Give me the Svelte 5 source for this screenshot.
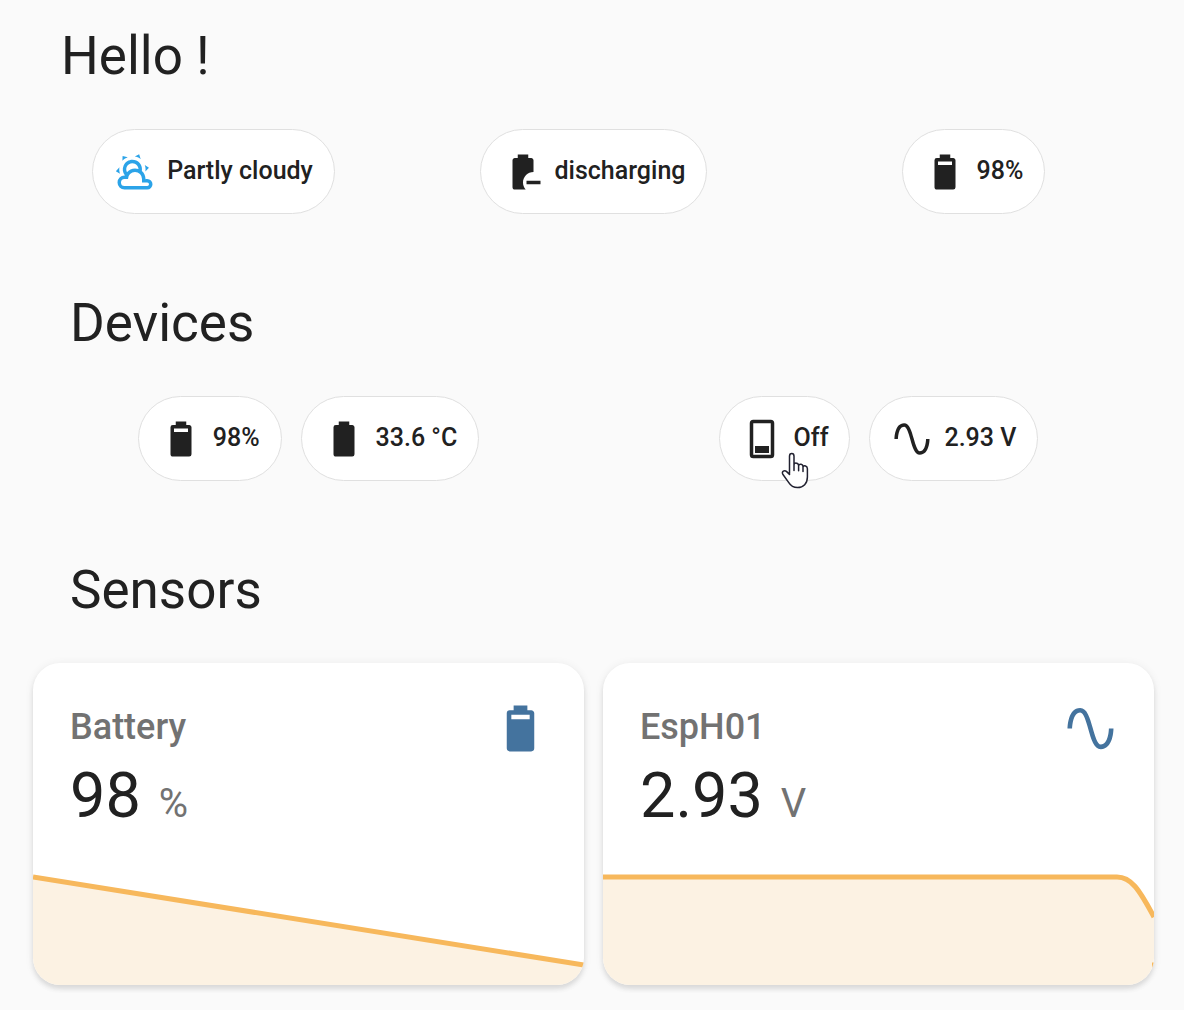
<script>
  const icons = {
    cloudy:
      'M12.74,5.47C15.1,6.5 16.35,9.03 15.92,11.46C17.19,12.56 18,14.19 18,16V16.17C18.31,16.06 18.65,16 19,16A3,3 0 0,1 22,19A3,3 0 0,1 19,22H6A4,4 0 0,1 2,18A4,4 0 0,1 6,14H6.27C5,12.45 4.6,10.24 5.5,8.26C6.72,5.5 9.97,4.24 12.74,5.47M11.93,7.3C10.16,6.5 8.09,7.31 7.31,9.07C6.85,10.09 6.93,11.22 7.41,12.13C8.5,10.83 10.16,10 12,10C12.7,10 13.38,10.12 14,10.34C13.94,9.06 13.18,7.86 11.93,7.3M13.55,3.64C13,3.4 12.45,3.23 11.88,3.12L14.37,1.82L15.27,4.71C14.76,4.29 14.19,3.93 13.55,3.64M6.09,4.44C5.6,4.79 5.17,5.19 4.8,5.63L4.91,2.82L7.87,3.5C7.25,3.71 6.65,4.03 6.09,4.44M18,9.71C17.91,9.12 17.78,8.55 17.59,8L19.97,9.5L17.92,11.73C18.03,11.08 18.05,10.4 18,9.71M3.04,11.3C3.11,11.9 3.24,12.47 3.43,13L1.06,11.5L3.1,9.28C3,9.93 2.97,10.61 3.04,11.3M19,18H16V16A4,4 0 0,0 12,12A4,4 0 0,0 8,16H6A2,2 0 0,0 4,18A2,2 0 0,0 6,20H19A1,1 0 0,0 20,19A1,1 0 0,0 19,18Z',
    batteryMinus:
      'M16.67,4C17.4,4 18,4.6 18,5.33V12C14.69,12 12,14.69 12,18C12,19.54 12.58,20.94 13.53,22H7.33C6.6,22 6,21.4 6,20.67V5.33C6,4.6 6.6,4 7.33,4H9V2H15V4H16.67M14,17V19H22V17H14Z',
    battery90:
      'M16,8H8V6H16M16.67,4H15V2H9V4H7.33A1.33,1.33 0 0,0 6,5.33V20.67C6,21.4 6.6,22 7.33,22H16.67A1.33,1.33 0 0,0 18,20.67V5.33C18,4.6 17.4,4 16.67,4Z',
    battery:
      'M16.67,4H15V2H9V4H7.33A1.33,1.33 0 0,0 6,5.33V20.67C6,21.4 6.6,22 7.33,22H16.67A1.33,1.33 0 0,0 18,20.67V5.33C18,4.6 17.4,4 16.67,4Z',
    switchOff:
      'M17,1H7A2,2 0 0,0 5,3V21A2,2 0 0,0 7,23H17A2,2 0 0,0 19,21V3A2,2 0 0,0 17,1M17,21H7V3H17V21M8,16H16V20H8V16Z',
    sine:
      'M16.5,21C13.5,21 12.31,16.76 11.05,12.28C10.14,9.04 9,5 7.5,5C4.11,5 4,11.93 4,12H2C2,11.63 2.06,3 7.5,3C10.5,3 11.71,7.25 12.97,11.74C13.83,14.8 15,19 16.5,19C19.94,19 20.03,12.07 20.03,12H22.03C22.03,12.37 21.97,21 16.5,21Z'
  };

  const summary = [
    { icon: 'cloudy', label: 'Partly cloudy', blue: true },
    { icon: 'batteryMinus', label: 'discharging' },
    { icon: 'battery90', label: '98%' }
  ];

  const devices = [
    [
      { icon: 'battery90', label: '98%' },
      { icon: 'battery', label: '33.6 °C' }
    ],
    [
      { icon: 'switchOff', label: 'Off', pointer: true },
      { icon: 'sine', label: '2.93 V' }
    ]
  ];

  const sensors = [
    {
      name: 'Battery',
      value: '98',
      unit: '%',
      icon: 'battery90',
      line: 'M0,4L551,92'
    },
    {
      name: 'EspH01',
      value: '2.93',
      unit: 'V',
      icon: 'sine',
      line: 'M0,4H514C528,4 536,16 551,44',
      tail: 'M549,92H551'
    }
  ];
</script>

{#snippet chip(item)}
  <button class="chip" type="button">
    <svg class="chip-icon" class:blue={item.blue} viewBox="0 0 24 24" aria-hidden="true">
      <path d={icons[item.icon]} fill-rule="evenodd" />
    </svg>
    <span class="chip-label">{item.label}</span>
    {#if item.pointer}
      <svg class="pointer" viewBox="0 0 28 37" aria-hidden="true">
        <path
          d="M8.5,21.5V4.2C8.5,0.6 13,0.6 13,4.2V12.6C13.6,10.4 17.6,10.6 17.6,13.6C18.4,11.4 22,11.8 22,14.8C23,13 26.4,13.6 26.4,16.8V25C26.4,31.5 22.4,35.6 16.6,35.6C12,35.6 9.6,33.6 7.6,30.4L1.8,22.2C0.4,19.6 3.4,17.8 5.4,19.4L8.5,22.4M13,12.4V18.4M17.6,13.6V18.8M22,14.8V19.4"
        />
      </svg>
    {/if}
  </button>
{/snippet}

<main>
  <section>
    <h1 class="greeting">Hello !</h1>
    <div class="row thirds">
      {#each summary as item}
        <div class="group">{@render chip(item)}</div>
      {/each}
    </div>
  </section>

  <section>
    <h1>Devices</h1>
    <div class="row halves">
      {#each devices as group}
        <div class="group">
          {#each group as item}
            {@render chip(item)}
          {/each}
        </div>
      {/each}
    </div>
  </section>

  <section>
    <h1>Sensors</h1>
    <div class="halves">
      {#each sensors as s}
        <article class="card">
          <header>
            <h2>{s.name}</h2>
            <svg class="card-icon" viewBox="0 0 24 24" aria-hidden="true">
              <path d={icons[s.icon]} fill-rule="evenodd" />
            </svg>
          </header>
          <p class="reading">
            <span class="value">{s.value}</span>
            <span class="unit">{s.unit}</span>
          </p>
          <svg class="chart" viewBox="0 0 551 112" preserveAspectRatio="none" aria-hidden="true">
            <path class="area" d="{s.line}V112H0Z" />
            <path class="line" d={s.line} />
            {#if s.tail}
              <path class="line" d={s.tail} />
            {/if}
          </svg>
        </article>
      {/each}
    </div>
  </section>
</main>

<style>
  :global(body) {
    margin: 0;
    background: #fafafa;
  }

  main {
    padding: 0 30px 24px 33px;
    font-family: Roboto, sans-serif;
    color: #212121;
  }

  h1 {
    margin: 0;
    padding: 24px 37px 41px;
    font-size: 53px;
    line-height: 64px;
    font-weight: 400;
  }

  .greeting {
    padding-left: 28px;
  }

  .row {
    padding-bottom: 53px;
  }

  .thirds,
  .halves {
    display: grid;
    gap: 19px;
  }

  .thirds {
    grid-template-columns: repeat(3, 1fr);
  }

  .halves {
    grid-template-columns: repeat(2, 1fr);
  }

  .group {
    display: flex;
    justify-content: center;
    gap: 19px;
  }

  .chip {
    position: relative;
    display: flex;
    align-items: center;
    gap: 11px;
    box-sizing: border-box;
    height: 85px;
    padding: 0 21px;
    border: 1px solid #e0e0e0;
    border-radius: 43px;
    background: #fff;
    color: #212121;
    font-family: inherit;
    font-size: 25px;
    line-height: 32px;
    font-weight: 500;
    white-space: nowrap;
    cursor: pointer;
  }

  .chip-label {
    padding-bottom: 1px;
  }

  .chip-icon {
    width: 42px;
    height: 42px;
    fill: #212121;
  }

  .chip-icon.blue {
    fill: #2ba3e8;
  }

  .pointer {
    position: absolute;
    left: 61px;
    top: 55px;
    width: 28px;
    height: 37px;
    fill: #fff;
    stroke: #212130;
    stroke-width: 1.5;
    stroke-linejoin: round;
    stroke-linecap: round;
  }

  .card {
    display: flex;
    flex-direction: column;
    overflow: hidden;
    border-radius: 27px;
    background: #fff;
    box-shadow:
      0 4px 5px rgba(0, 0, 0, 0.1),
      0 1px 10px rgba(0, 0, 0, 0.07);
  }

  header {
    display: flex;
    justify-content: space-between;
    align-items: flex-start;
    padding: 38px 36px 0 37px;
  }

  h2 {
    margin: 0;
    font-size: 36px;
    line-height: 52px;
    font-weight: 500;
    color: #727272;
  }

  .card-icon {
    width: 55px;
    height: 55px;
    fill: #44739e;
  }

  .reading {
    display: flex;
    align-items: baseline;
    gap: 18px;
    margin: 0;
    padding: 2px 37px 31px;
    line-height: 76px;
  }

  .value {
    font-size: 63px;
  }

  .unit {
    font-size: 40px;
    color: #727272;
  }

  .chart {
    display: block;
    width: 100%;
    height: 112px;
  }

  .area {
    fill: #fcf2e3;
  }

  .line {
    fill: none;
    stroke: #f7b85c;
    stroke-width: 5;
    vector-effect: non-scaling-stroke;
  }
</style>
